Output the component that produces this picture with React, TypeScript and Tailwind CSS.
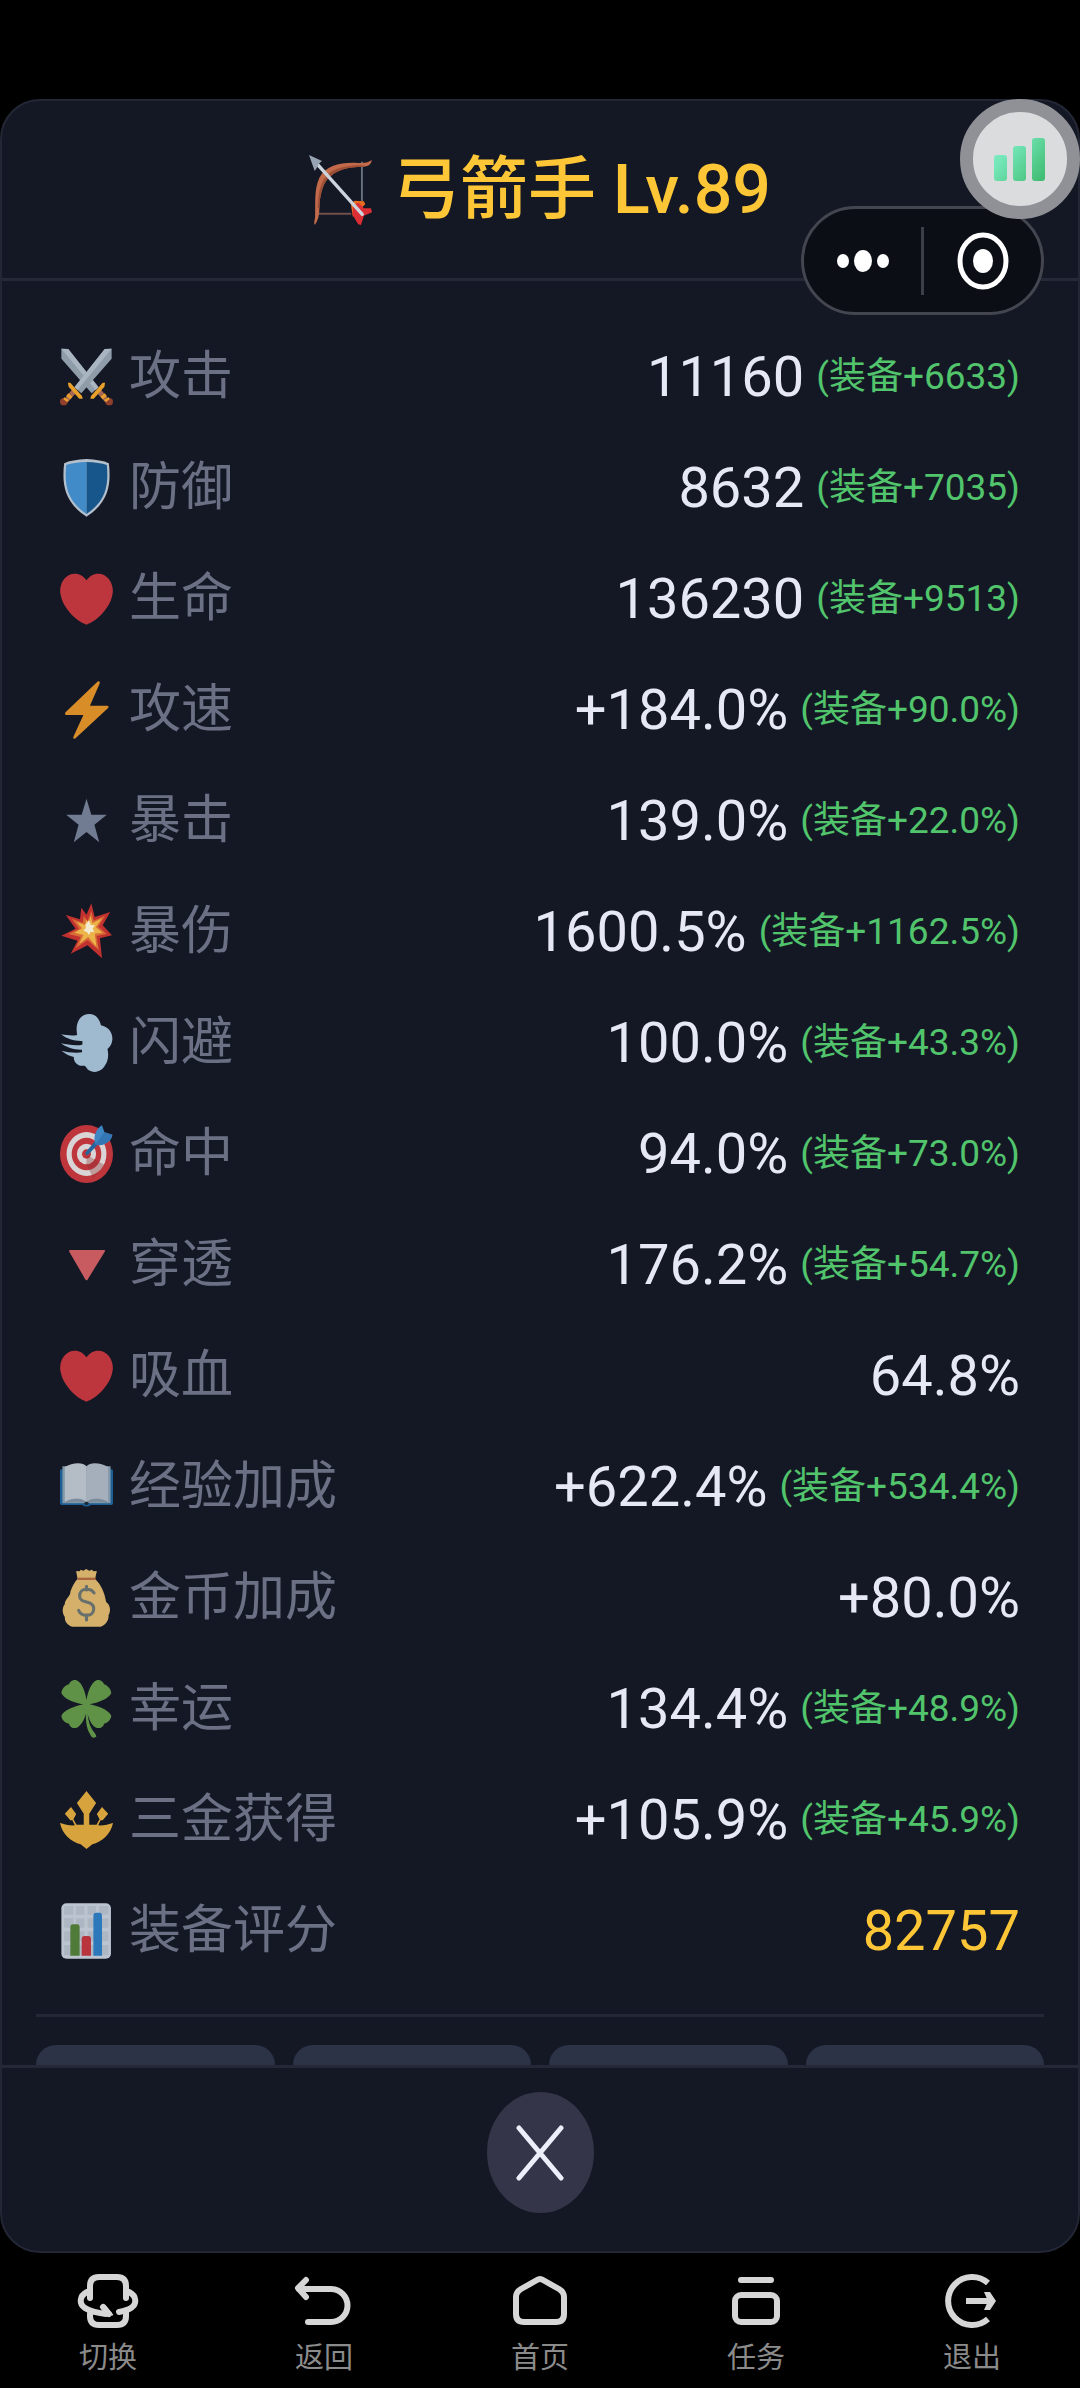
import React from 'react'

type IconProps = { children: React.ReactNode }

const EmojiBox = ({ children }: IconProps) => (
    <svg viewBox="0 0 154 174" preserveAspectRatio="none" className="h-[58px] w-[53px] shrink-0" aria-hidden="true">
        {children}
    </svg>
)

const Sword = () => (
    <g>
        <path d="M4 2L24 3L112 118L92 136L4 32Z" fill="#8f9caa" />
        <path d="M4 2L24 3L112 118L103 126Z" fill="#a9b5c1" />
        <path d="M108 136L118 124L146 158L138 170Z" fill="#a86752" />
        <path d="M90 144L124 104L131 104L129 116L98 152L88 152Z" fill="#e9a02b" />
        <path d="M118 146L130 136L136 144L124 154Z" fill="#e9a02b" />
        <circle cx="143" cy="161" r="11" fill="#8f3f2c" />
        <path d="M128 156L142 148L144 154L134 162Z" fill="#e9a02b" />
    </g>
)

const Swords = () => (
    <EmojiBox>
        <Sword />
        <g transform="translate(154 0) scale(-1 1)">
            <Sword />
        </g>
    </EmojiBox>
)

const Shield = () => (
    <EmojiBox>
        <path d="M77 0C104 2 128 5 142 13C148 70 145 128 77 173C9 128 6 70 12 13C26 5 50 2 77 0Z" fill="#b3c0cc" />
        <path d="M77 9C52 10 32 13 18 18C13 72 17 124 77 165Z" fill="#428bc9" />
        <path d="M77 9C102 10 122 13 136 18C141 72 137 124 77 165Z" fill="#17568a" />
    </EmojiBox>
)

const Heart = () => (
    <EmojiBox>
        <path d="M153.500 62C153.500 34 135 11 111 11C97 11 85 19 77 31C69 19 57 11 43 11C19 11 .5 34 .5 62C.5 66 1 70 1.500 73C8 115 48 154 77 164C106 154 146 115 152.500 73C153 70 153.500 66 153.500 62Z" fill="#be363d" />
    </EmojiBox>
)

const Bolt = () => (
    <EmojiBox>
        <path d="M113 1C116 2 116 5 115 8L87 74H138C142 75 142 79 139 82L45 172C41 175 37 172 39 167L68 102H18C14 101 14 97 16 94L108 3C110 1 111 0 113 1Z" fill="#d98d28" />
    </EmojiBox>
)

const Star = () => (
    <EmojiBox>
        <path d="M77 20L91 68H136L100 98L114 151L77 120L40 151L54 98L18 68H63Z" fill="#717c92" />
    </EmojiBox>
)

const Burst = () => (
    <EmojiBox>
        <path d="M91 1L101 42L146 27L124 67L151 97L116 106L122 166L80 127L31 152L51 113L4 98L45 77L17 36L58 49L62 14L77 35Z" fill="#c0312f" />
        <path d="M91 24L98 53L131 38L111 71L136 93L106 99L113 142L80 111L45 136L60 102L24 93L56 77L34 47L66 59L69 38L80 54Z" fill="#d96b35" />
        <path d="M89 38L94 61L122 46L104 73L124 89L101 92L106 132L82 102L56 122L68 96L42 89L64 76L48 56L73 66L76 50L83 60Z" fill="#edb34b" />
        <path d="M84 52L90 67L101 66L95 77L100 86L89 87L84 96L78 87L68 83L75 75L74 65Z" fill="#f3ead2" />
    </EmojiBox>
)

const Dash = () => (
    <EmojiBox>
        <path d="M85 0C103 0 115 14 119 34C140 38 154 56 152 78C151 90 145 99 138 105C142 123 140 141 131 154C121 174 98 180 80 166C77 160 74 156 71 155C52 158 40 146 40 129C27 126 15 119 4 110C20 114 43 118 64 115V107C42 108 20 101 3 88C22 92 45 96 65 92V81C42 82 20 75 3 61C20 64 36 66 50 63C43 28 58 0 85 0Z" fill="#9fb9cf" />
    </EmojiBox>
)

const Target = () => (
    <EmojiBox>
        <ellipse cx="77" cy="87" rx="77" ry="87" fill="#be353c" />
        <ellipse cx="77" cy="87" rx="58" ry="66" fill="#d9d4d5" />
        <ellipse cx="77" cy="87" rx="43" ry="49" fill="#be353c" />
        <ellipse cx="77" cy="87" rx="28" ry="31" fill="#d9d4d5" />
        <ellipse cx="77" cy="87" rx="13" ry="14" fill="#be353c" />
        <path d="M79 91L130 120L96 158L76 116Z" fill="#8d3435" opacity=".35" />
        <path d="M77 91L73 83L119 28L128 39L82 89Z" fill="#28659c" />
        <path d="M100 43C100 24 110 7 122 1L129 22L152 29C151 43 137 58 115 61L103 58Z" fill="#3f86c4" />
        <path d="M103 58L129 22L152 29C151 43 137 58 115 61Z" fill="#3476b4" />
    </EmojiBox>
)

const Triangle = () => (
    <EmojiBox>
        <path d="M29 42H129Q132 43 130 47L80 131Q77 135 74 131L27 47Q25 43 29 42Z" fill="#c75b5f" />
    </EmojiBox>
)

const Book = () => (
    <EmojiBox>
        <path d="M0 38Q0 34 5 34H149Q154 34 154 38V136Q154 141 149 141H90Q77 150 64 141H5Q0 141 0 136Z" fill="#1d5f94" />
        <path d="M7 25H147V136H7Z" fill="#8198a9" />
        <path d="M14 27C34 14 66 10 77 25V132C62 117 32 119 14 132Z" fill="#b4bcc6" />
        <path d="M140 27C120 14 88 10 77 25V132C92 117 122 119 140 132Z" fill="#a5aebb" />
        <path d="M14 133C35 120 62 119 77 133C92 119 119 120 140 133L137 136C116 130 92 130 77 137C62 130 38 130 17 136Z" fill="#7c8b99" />
        <ellipse cx="77" cy="136" rx="6" ry="5" fill="#1a2733" />
    </EmojiBox>
)

const MoneyBag = () => (
    <EmojiBox>
        <path d="M51 30L47 6L57 7L60 2L68 5L76 0L85 5L93 2L97 7L107 6L102 30C119 46 130 72 134 99C147 108 148 127 141 139C143 153 132 169 118 173H36C22 170 13 157 14 144C5 132 7 113 14 106C13 91 32 81 30 68C36 51 43 38 51 30Z" fill="#d4b06a" />
        <path d="M51 26H103V33H51Z" fill="#aa6440" />
        <path d="M99 72C93 62 83 61 77 61C65 61 57 69 57 81C57 107 98 91 98 119C98 133 88 139 77 139C66 139 57 133 54 124M77 52V63M77 137V153" fill="none" stroke="#68706e" strokeWidth="9" strokeLinecap="round" />
    </EmojiBox>
)

const Clover = () => (
    <EmojiBox>
        <path d="M77 60C73 34 64 8 48 1C38 -3 28 6 26 13C14 16 5 28 4 39C12 58 42 68 68 73C42 79 12 90 4 107C5 120 15 128 26 131C29 142 39 147 49 143C65 133 72 115 75 101C75 128 78 146 87 162C91 173 98 176 105 170C108 163 93 154 86 132C83 121 81 111 80 101C85 119 92 136 105 143C115 147 126 142 128 131C139 128 148 119 149 107C139 88 112 79 86 73C112 68 139 58 149 40C148 28 140 17 128 13C125 5 117 -3 106 1C90 9 81 35 77 60Z" fill="#5f9147" />
    </EmojiBox>
)

const Trident = () => (
    <EmojiBox>
        <path d="M77 0L105 36L85 68V101H106L115 85L107 69L122 48L140 68L124 88H118L111 103C126 104 142 100 154 96C148 130 121 153 94 160L77 174L60 160C33 153 6 130 0 96C12 100 28 104 43 103L36 88H30L14 68L32 48L47 69L39 85L48 101H69V68L49 36Z" fill="#d7a33d" />
    </EmojiBox>
)

const Chart = () => (
    <EmojiBox>
        <rect x="4" y="4" width="144" height="166" rx="15" fill="#bcc5cf" />
        <path d="M12 12H39V38H12ZM46 12H71V38H46ZM80 12H105V38H80ZM113 12H141V38H113ZM12 49H39V77H12ZM46 49H71V77H46ZM80 49H105V77H80ZM113 49H141V77H113ZM12 88H39V118H12ZM46 88H71V118H46ZM80 88H105V118H80ZM113 88H141V118H113ZM12 129H39V160H12ZM46 129H71V160H46ZM80 129H105V160H80ZM113 129H141V160H113Z" fill="#adb7c3" />
        <path d="M30 161V77Q30 67 38 67H50Q57 67 57 77V161Z" fill="#4f7a38" />
        <path d="M63 161V112Q63 102 71 102H83Q90 102 90 112V161Z" fill="#b9343d" />
        <path d="M97 161V42Q97 32 105 32H115Q122 32 122 42V161Z" fill="#2b78bb" />
    </EmojiBox>
)

const Bow = () => (
    <svg viewBox="0 0 188 210" preserveAspectRatio="none" className="h-[70px] w-[63px] shrink-0" aria-hidden="true">
        <path d="M158 20V140" stroke="#8d95a3" strokeWidth="4" />
        <path d="M20 176H126" stroke="#704f4a" strokeWidth="6" />
        <path d="M188 16C184 30 176 35 162 35C115 36 80 44 55 72C40 92 32 122 31 160C31 180 27 197 18 209C14 207 16 198 18 188C20 150 14 104 31 68C50 32 90 22 136 23C155 24 174 25 180 19Z" fill="#c26a4a" />
        <path d="M31 160C32 122 40 92 55 72C80 44 115 36 162 35L162 31C112 31 74 38 51 64C34 84 26 120 26 160Z" fill="#9d4f36" />
        <path d="M125 148L136 137L164 139L168 148L150 165L131 186Z" fill="#ea6a21" />
        <path d="M132 150L148 143L164 160L185 160L188 172L164 182L155 210L147 208L130 180Z" fill="#dc2f35" />
        <path d="M18 20L159 178" stroke="#ccd5dd" strokeWidth="10" strokeLinecap="round" />
        <path d="M0 0L39 18L28 27L27 33L17 48Z" fill="#97a2b3" />
    </svg>
)

type Stat = {
    icon: React.ComponentType
    label: string
    value: string
    bonus?: string
    gold?: boolean
}

const stats: Stat[] = [
    { icon: Swords, label: '攻击', value: '11160', bonus: '(装备+6633)' },
    { icon: Shield, label: '防御', value: '8632', bonus: '(装备+7035)' },
    { icon: Heart, label: '生命', value: '136230', bonus: '(装备+9513)' },
    { icon: Bolt, label: '攻速', value: '+184.0%', bonus: '(装备+90.0%)' },
    { icon: Star, label: '暴击', value: '139.0%', bonus: '(装备+22.0%)' },
    { icon: Burst, label: '暴伤', value: '1600.5%', bonus: '(装备+1162.5%)' },
    { icon: Dash, label: '闪避', value: '100.0%', bonus: '(装备+43.3%)' },
    { icon: Target, label: '命中', value: '94.0%', bonus: '(装备+73.0%)' },
    { icon: Triangle, label: '穿透', value: '176.2%', bonus: '(装备+54.7%)' },
    { icon: Heart, label: '吸血', value: '64.8%' },
    { icon: Book, label: '经验加成', value: '+622.4%', bonus: '(装备+534.4%)' },
    { icon: MoneyBag, label: '金币加成', value: '+80.0%' },
    { icon: Clover, label: '幸运', value: '134.4%', bonus: '(装备+48.9%)' },
    { icon: Trident, label: '三金获得', value: '+105.9%', bonus: '(装备+45.9%)' },
    { icon: Chart, label: '装备评分', value: '82757', gold: true },
]

const StatRow = ({ icon: Icon, label, value, bonus, gold }: Stat) => (
    <div className="flex h-[111px] items-center justify-between">
        <dt className="flex items-center gap-4 text-[52px] leading-none text-[#6b7084]">
            <Icon />
            {label}
        </dt>
        <dd className="flex items-center gap-3">
            <span className={gold ? 'text-[56px] leading-none text-[#fdc636]' : 'text-[56px] leading-none text-[#e6e8f5]'}>{value}</span>
            {bonus && <span className="text-[37px] leading-none text-[#51c46c]">{bonus}</span>}
        </dd>
    </div>
)

const NavIcon = ({ children }: IconProps) => (
    <svg viewBox="0 0 64 56" className="h-14 w-16" fill="none" stroke="#d6d6d6" strokeWidth="6" strokeLinecap="round" strokeLinejoin="round" aria-hidden="true">
        {children}
    </svg>
)

const navItems = [
    {
        label: '切换',
        icon: (
            <NavIcon>
                <path d="M14 25V13Q14 4 23 4H41Q50 4 50 13V25" />
                <path d="M14 41V43Q14 52 23 52H41Q50 52 50 43V38" />
                <path d="M11 19C3 23 3 31 9 35C15 39 22 40 30 41" />
                <path d="M53 19C61 23 61 31 55 35C52 37 48 38 43 39" />
                <path d="M27 34L33 41" />
                <path d="M29 32L37 42L28 41Z" fill="#d6d6d6" strokeWidth="1" />
            </NavIcon>
        ),
    },
    {
        label: '返回',
        icon: (
            <NavIcon>
                <path d="M14 7L6 15L14 24" />
                <path d="M7 16H39A16 16 0 0 1 39 49H16" />
            </NavIcon>
        ),
    },
    {
        label: '首页',
        icon: (
            <NavIcon>
                <path d="M29 7Q32 5 35 7L51 16Q56 19 56 24V41Q56 49 48 49H16Q8 49 8 41V24Q8 19 13 16Z" />
            </NavIcon>
        ),
    },
    {
        label: '任务',
        icon: (
            <NavIcon>
                <path d="M17 7H47" />
                <rect x="11" y="22" width="42" height="27" rx="6" />
            </NavIcon>
        ),
    },
    {
        label: '退出',
        icon: (
            <NavIcon>
                <path d="M48 10A24 24 0 1 0 48 46" strokeLinecap="butt" />
                <path d="M26 28H50" strokeLinecap="butt" />
                <path d="M44 19H50L56 28L50 37H44L48 28Z" fill="#d6d6d6" stroke="none" />
            </NavIcon>
        ),
    },
]

const tabs = ['武器', '防具', '饰品', '技能']

const App = () => {
    return (
        <div className="relative flex min-h-screen flex-col bg-black pt-[99px] font-['Roboto','Noto_Sans_CJK_SC',sans-serif]">
            <main className="flex flex-1 flex-col rounded-[40px] border-2 border-[#232635] bg-[#141825]">
                <header className="flex h-[180px] items-center justify-center gap-5 border-b-[3px] border-[#252837]">
                    <Bow />
                    <h1 className="text-[68px] leading-none font-medium text-[#fdc636]">弓箭手 Lv.89</h1>
                </header>

                {/* Stats */}
                <section className="flex-1 px-[34px] pt-10">
                    <dl className="px-6">
                        {stats.map((stat) => (
                            <StatRow key={stat.label} {...stat} />
                        ))}
                    </dl>
                    <hr className="mt-7 border-t-[3px] border-[#232736]" />
                    <div className="mt-7 grid h-5 grid-cols-4 gap-[18px] overflow-hidden">
                        {tabs.map((tab) => (
                            <button key={tab} type="button" aria-label={tab} className="h-20 rounded-[20px] bg-[#2d3347]" />
                        ))}
                    </div>
                </section>

                {/* Close */}
                <footer className="flex justify-center border-t-[3px] border-[#252837] pt-6 pb-[38px]">
                    <button type="button" aria-label="关闭" className="flex h-[121px] w-[107px] items-center justify-center rounded-[50%] bg-[#343548]">
                        <svg viewBox="0 0 48 56" className="h-14 w-12" fill="none" stroke="#eceefa" strokeWidth="5" strokeLinecap="round" aria-hidden="true">
                            <path d="M3 3L45 53M45 3L3 53" />
                        </svg>
                    </button>
                </footer>
            </main>

            {/* System navigation */}
            <nav className="grid h-[135px] grid-cols-5 pt-5">
                {navItems.map((item) => (
                    <button key={item.label} type="button" className="flex flex-col items-center gap-[14px] text-[29px] leading-[30px] text-[#8b8b8b]">
                        {item.icon}
                        {item.label}
                    </button>
                ))}
            </nav>

            {/* Mini program capsule */}
            <div className="absolute top-[206px] right-9 flex h-[109px] w-[243px] items-center rounded-full border-[3px] border-[#44464f] bg-[#0c0e16]">
                <button type="button" aria-label="更多" className="flex h-full flex-1 items-center justify-center">
                    <svg viewBox="0 0 52 22" className="h-[22px] w-[52px]" fill="#fff" aria-hidden="true">
                        <ellipse cx="6" cy="11" rx="6" ry="7" />
                        <ellipse cx="26" cy="11" rx="9" ry="11" />
                        <ellipse cx="46" cy="11" rx="6" ry="7" />
                    </svg>
                </button>
                <span className="h-[68px] w-[3px] bg-[#3c3e48]" />
                <button type="button" aria-label="退出小程序" className="flex h-full flex-1 items-center justify-center">
                    <svg viewBox="0 0 52 58" className="h-[58px] w-[52px]" aria-hidden="true">
                        <ellipse cx="26" cy="29" rx="23" ry="26" fill="none" stroke="#fff" strokeWidth="5" />
                        <ellipse cx="26" cy="29" rx="10" ry="12" fill="#fff" />
                    </svg>
                </button>
            </div>

            {/* Floating signal button */}
            <button type="button" aria-label="网络" className="absolute top-[99px] right-0 flex size-[120px] items-center justify-center rounded-full border-[13px] border-[#909197] bg-[#dadcde]">
                <svg viewBox="0 0 52 44" className="h-11 w-[52px]" aria-hidden="true">
                    <defs>
                        <linearGradient id="signal" x1="0" y1="0" x2="52" y2="44" gradientUnits="userSpaceOnUse">
                            <stop offset="0" stopColor="#8bf0ca" />
                            <stop offset=".3" stopColor="#74e6b8" />
                            <stop offset="1" stopColor="#3cb96c" />
                        </linearGradient>
                    </defs>
                    <rect x="0" y="18" width="13" height="26" rx="3" fill="url(#signal)" />
                    <rect x="19" y="9" width="13" height="35" rx="3" fill="url(#signal)" />
                    <rect x="38" y="1" width="13" height="43" rx="3" fill="url(#signal)" />
                </svg>
            </button>
        </div>
    )
}

export default App
